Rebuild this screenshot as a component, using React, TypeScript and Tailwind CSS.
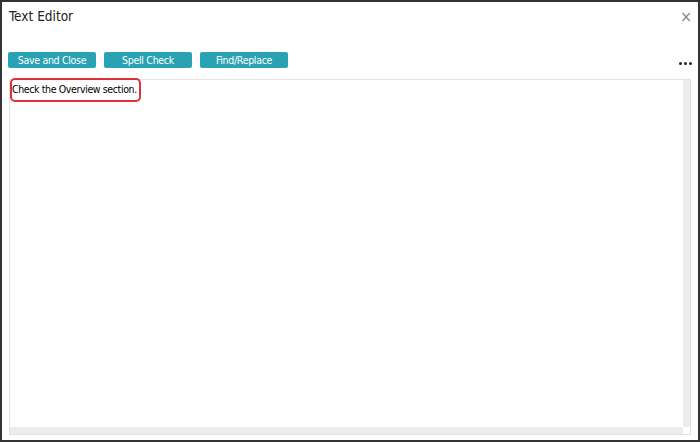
export default function App() {
  const font = { fontFamily: '"DejaVu Sans Condensed", "Liberation Sans", sans-serif' };
  const btn =
    "w-[88px] h-[16px] rounded-[2px] bg-[#29a3b3] text-white text-[10.5px] tracking-[-0.3px] leading-[16px]";
  return (
    <div className="w-[700px] h-[442px] bg-white border-2 border-[#333] relative" style={font}>
      <div className="flex items-start justify-between pl-[7px] pr-[6px] pt-[4px] h-[48px]">
        <h1 className="text-[13.5px] text-[#222] leading-[20px]">Text Editor</h1>
        <button className="text-[#888] text-[16px] leading-[16px] mt-[3px]">×</button>
      </div>
      <div className="flex items-center pl-[6px] pr-[6px] gap-[7px] h-[20px]">
        <button className={btn}>Save and Close</button>
        <button className={btn + " ml-[1px]"}>Spell Check</button>
        <button className={btn + " ml-[1px]"}>Find/Replace</button>
        <div className="ml-auto flex gap-[2px] items-center mt-[6px]">
          <span className="w-[3px] h-[3px] bg-[#222] rounded-full" />
          <span className="w-[3px] h-[3px] bg-[#222] rounded-full" />
          <span className="w-[3px] h-[3px] bg-[#222] rounded-full" />
        </div>
      </div>
      <div className="mx-[7px] mt-[9px] h-[356px] border border-[#e2e2e2] flex flex-col">
        <div className="flex flex-1">
          <div className="flex-1 relative">
            <div className="absolute left-0 top-[-2px] w-[131px] h-[24px] border-2 border-[#e0303a] rounded-[5px]" />
            <p className="pl-[2px] pt-[2px] text-[10.5px] tracking-[-0.38px] text-black leading-[14px]">
              Check the Overview section.
            </p>
          </div>
          <div className="w-[7px] bg-[#ececec]" />
        </div>
        <div className="flex h-[7px]">
          <div className="flex-1 bg-[#ececec]" />
          <div className="w-[7px] bg-white" />
        </div>
      </div>
    </div>
  );
}
